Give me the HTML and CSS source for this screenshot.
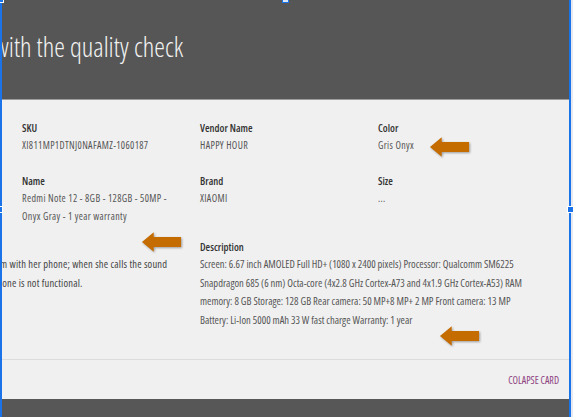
FILE: index.html
```html
<!DOCTYPE html>
<html lang="en">
<head>
<meta charset="utf-8">
<title>Quality check card</title>
<link rel="stylesheet" href="styles.css">
</head>
<body>
<div class="frame">
  <header class="hero">
    <h1 class="hero-title">with the quality check</h1>
  </header>
  <section class="details">
    <div class="grid">
      <div class="field">
        <div class="label">SKU</div>
        <div class="value">XI811MP1DTNJ0NAFAMZ-1060187</div>
      </div>
      <div class="field">
        <div class="label">Vendor Name</div>
        <div class="value">HAPPY HOUR</div>
      </div>
      <div class="field">
        <div class="label">Color</div>
        <div class="value">Gris Onyx</div>
      </div>
      <div class="field">
        <div class="label">Name</div>
        <div class="value">Redmi Note 12 - 8GB - 128GB - 50MP - Onyx Gray - 1 year warranty</div>
      </div>
      <div class="field">
        <div class="label">Brand</div>
        <div class="value">XIAOMI</div>
      </div>
      <div class="field">
        <div class="label">Size</div>
        <div class="value">...</div>
      </div>
    </div>
    <div class="row">
      <p class="comment">A problem with her phone; when she calls the sound of the phone is not functional.</p>
      <div class="field desc">
        <div class="label">Description</div>
        <div class="value">Screen: 6.67 inch AMOLED Full HD+ (1080 x 2400 pixels) Processor: Qualcomm SM6225 Snapdragon 685 (6 nm) Octa-core (4x2.8 GHz Cortex-A73 and 4x1.9 GHz Cortex-A53) RAM memory: 8 GB Storage: 128 GB Rear camera: 50 MP+8 MP+ 2 MP Front camera: 13 MP<br>Battery: Li-Ion 5000 mAh 33 W fast charge Warranty: 1 year</div>
      </div>
    </div>
  </section>
  <footer class="actions">
    <a class="collapse" href="#">Colapse card</a>
  </footer>
  <div class="bottom"></div>

  <span class="handle h-tl"></span>
  <span class="handle h-tm"></span>
  <span class="handle h-ml"></span>
  <span class="handle h-mr"></span>

  <svg class="arrow a1" viewBox="0 0 42 22" aria-hidden="true"><path d="M1 11 L13 1 L13 6 L41 6 L41 16 L13 16 L13 21 Z"/></svg>
  <svg class="arrow a2" viewBox="0 0 42 22" aria-hidden="true"><path d="M1 11 L13 1 L13 6 L41 6 L41 16 L13 16 L13 21 Z"/></svg>
  <svg class="arrow a3" viewBox="0 0 42 22" aria-hidden="true"><path d="M1 11 L13 1 L13 6 L41 6 L41 16 L13 16 L13 21 Z"/></svg>
</div>
</body>
</html>
```

FILE: styles.css
```css
* { box-sizing: border-box; }

html, body {
  margin: 0;
  padding: 0;
  background: #e6eaf0;
  overflow: hidden;
}

body {
  font-family: "Open Sans", "Liberation Sans", sans-serif;
  font-stretch: 75%;
}

.frame {
  position: relative;
  width: 571px;
  height: 417px;
  border-left: 2px solid #1a73e8;
  border-right: 2px solid #1a73e8;
  background: #f0f0f0;
  display: flex;
  flex-direction: column;
}

.hero {
  height: 100px;
  background: #565656;
  border-bottom: 1px solid #9c9c9c;
  display: flex;
  align-items: center;
  overflow: hidden;
}

.hero-title {
  margin: -6px 0 0 -8px;
  font-weight: 300;
  font-size: 27px;
  line-height: 34px;
  color: #f2f2f2;
  white-space: nowrap;
}

.details {
  padding: 20px 0 30px 20px;
  overflow: hidden;
}

.grid {
  display: grid;
  grid-template-columns: 178px 178px 160px;
  row-gap: 19px;
}

.label {
  font-size: 10.5px;
  line-height: 16px;
  font-weight: 600;
  color: #333;
}

.value {
  font-size: 10px;
  line-height: 18px;
  color: #555;
  padding-right: 14px;
  letter-spacing: 0.35px;
}

.row {
  display: grid;
  grid-template-columns: 178px 350px;
  margin-top: 14px;
}

.comment {
  margin: 16px 0 0 -54px;
  font-size: 10.5px;
  line-height: 18.5px;
  letter-spacing: 0.2px;
  color: #444;
  width: 206px;
}

.desc .value {
  padding-right: 0;
  font-size: 10.5px;
  line-height: 18.5px;
  letter-spacing: 0;
}

.actions {
  border-top: 1px solid #dcdcdc;
  height: 40px;
  display: flex;
  align-items: center;
  justify-content: flex-end;
  padding-right: 10px;
}

.collapse {
  font-size: 10px;
  text-transform: uppercase;
  color: #8d3f80;
  text-decoration: none;
}

.bottom {
  flex: 1;
  background: #575757;
}

.handle {
  position: absolute;
  width: 7px;
  height: 7px;
  background: #1a73e8;
  border: 1px solid #fff;
}
.h-tl { left: -5px; top: -4px; }
.h-tm { left: 280px; top: -4px; background: #dbe7fb; border-color: #1a73e8; }
.h-ml { left: -6px; top: 206px; }
.h-mr { left: 565px; top: 206px; }

.arrow {
  position: absolute;
  width: 41px;
  height: 22px;
  fill: #c46c00;
  filter: drop-shadow(1px 1px 1px rgba(0, 0, 0, 0.35));
}
.a1 { left: 427px; top: 136px; }
.a2 { left: 139px; top: 231px; }
.a3 { left: 437px; top: 325px; }
```
